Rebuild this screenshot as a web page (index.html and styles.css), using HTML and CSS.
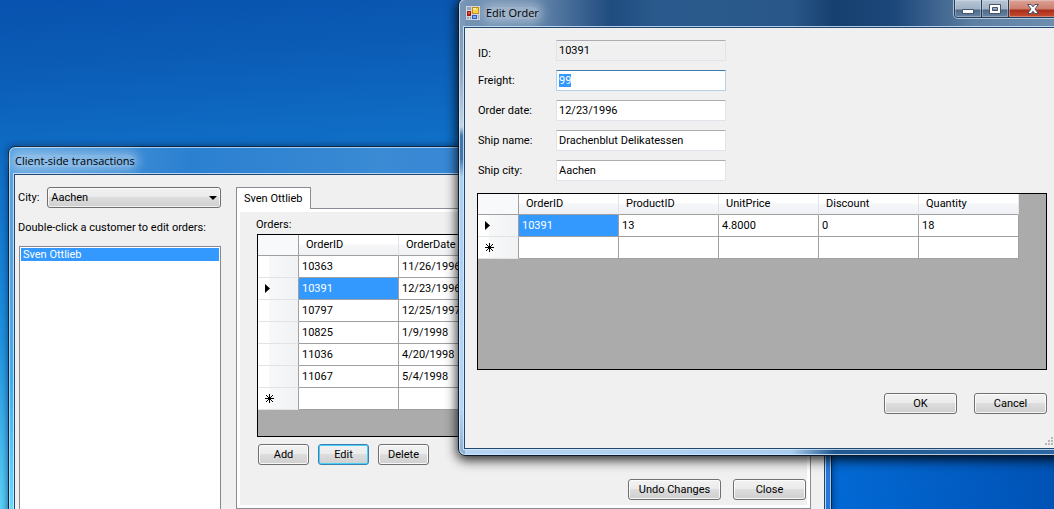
FILE: index.html
```html
<!DOCTYPE html>
<html lang="en">
<head>
<meta charset="utf-8">
<title>Client-side transactions</title>
<link rel="stylesheet" href="styles.css">
</head>
<body>
<main class="desktop">
  <section class="window main-window" aria-labelledby="main-title">
    <header class="titlebar"><h1 class="title" id="main-title">Client-side transactions</h1></header>
    <div class="client main-client">
      <div class="sidebar">
        <div class="city-row">
          <label for="city">City:</label>
          <span class="combo">
            <select id="city"><option>Aachen</option></select>
            <svg class="combo-arrow" width="8" height="4" viewBox="0 0 8 4"><path d="M0 0h8L4 4z"/></svg>
          </span>
        </div>
        <span class="hint" id="hint">Double-click a customer to edit orders:</span>
        <ul class="listbox" aria-labelledby="hint"><li class="selected">Sven Ottlieb</li></ul>
      </div>
      <div class="tabs">
        <div class="tab-strip"><button class="tab" type="button">Sven Ottlieb</button></div>
        <div class="tab-page">
          <div class="orders">
            <span class="orders-label">Orders:</span>
            <div class="grid orders-grid">
              <table>
                <thead><tr><th class="rowhead"></th><th>OrderID</th><th>OrderDate</th></tr></thead>
                <tbody>
                  <tr><td class="rowhead"></td><td>10363</td><td>11/26/1996</td></tr>
                  <tr><td class="rowhead"><svg class="mark" width="10" height="10" viewBox="0 0 10 10"><path d="M0 0l5 4.500-5 4.500z"/></svg></td><td class="current">10391</td><td>12/23/1996</td></tr>
                  <tr><td class="rowhead"></td><td>10797</td><td>12/25/1997</td></tr>
                  <tr><td class="rowhead"></td><td>10825</td><td>1/9/1998</td></tr>
                  <tr><td class="rowhead"></td><td>11036</td><td>4/20/1998</td></tr>
                  <tr><td class="rowhead"></td><td>11067</td><td>5/4/1998</td></tr>
                  <tr><td class="rowhead"><svg class="mark" width="10" height="10" viewBox="0 0 10 10"><path class="star" d="M4.500 0v9M0 4.500h9M1 1l7 7M8 1l-7 7"/></svg></td><td></td><td></td></tr>
                </tbody>
              </table>
            </div>
            <div class="button-row">
              <button class="btn" type="button">Add</button>
              <button class="btn focused" type="button">Edit</button>
              <button class="btn" type="button">Delete</button>
            </div>
          </div>
          <div class="page-actions">
            <button class="btn undo" type="button">Undo Changes</button>
            <button class="btn wide" type="button">Close</button>
          </div>
        </div>
      </div>
    </div>
  </section>

  <section class="window dialog" aria-labelledby="dialog-title">
    <header class="titlebar">
      <svg class="app-icon" width="14" height="14" viewBox="0 0 14 14">
        <path fill="#d0d5de" d="M0 0h14v14H0z"/>
        <path fill="#98a3b6" d="M1 1h4v3H1zM1 11h2v2H1zM4 11h1v2H4z"/>
        <path fill="#9c1f12" d="M1 5h4v5H1z"/><path fill="#df5140" d="M2 6h2v2H2z"/>
        <path fill="#c58b13" d="M6 1h7v7H6z"/><path fill="#ffd040" d="M7 2h5v5H7z"/><path fill="#ffee98" d="M7 2h3v2H7z"/>
        <path fill="#2b5fc0" d="M6 9h5v4H6z"/><path fill="#7fabf5" d="M7 10h3v2H7z"/><path fill="#98a3b6" d="M12 9h1v4h-1z"/>
      </svg>
      <h2 class="title" id="dialog-title">Edit Order</h2>
      <div class="caption-buttons">
        <button class="caption" type="button" aria-label="Minimize"><svg width="12" height="12" viewBox="0 0 12 12"><path class="glyph" d="M.5 6.500h11v4H.5z"/></svg></button>
        <button class="caption" type="button" aria-label="Maximize"><svg width="12" height="12" viewBox="0 0 12 12"><path class="glyph" fill-rule="evenodd" d="M.5 1.500h11v9H.5zM3.500 4.500h5v3h-5z"/></svg></button>
        <button class="caption close" type="button" aria-label="Close"><svg width="12" height="12" viewBox="0 0 12 12"><path class="glyph" d="M.7 1.500h3.500L6 3.800l1.800-2.300h3.500L8 6l3.300 4.500H7.800L6 8.200l-1.800 2.300H.7L4 6z"/></svg></button>
      </div>
    </header>
    <form class="client dialog-client">
      <div class="fields">
        <label class="low" for="id">ID:</label><input id="id" type="text" value="10391" readonly>
        <label for="freight">Freight:</label><input id="freight" class="active" type="text" value="99">
        <label for="date">Order date:</label><input id="date" type="text" value="12/23/1996">
        <label for="name">Ship name:</label><input id="name" type="text" value="Drachenblut Delikatessen">
        <label for="ship-city">Ship city:</label><input id="ship-city" type="text" value="Aachen">
      </div>
      <div class="grid details-grid">
        <table>
          <thead><tr><th class="rowhead"></th><th>OrderID</th><th>ProductID</th><th>UnitPrice</th><th>Discount</th><th>Quantity</th></tr></thead>
          <tbody>
            <tr><td class="rowhead"><svg class="mark" width="10" height="10" viewBox="0 0 10 10"><path d="M0 0l5 4.500-5 4.500z"/></svg></td><td class="current">10391</td><td>13</td><td>4.8000</td><td>0</td><td>18</td></tr>
            <tr><td class="rowhead"><svg class="mark" width="10" height="10" viewBox="0 0 10 10"><path class="star" d="M4.500 0v9M0 4.500h9M1 1l7 7M8 1l-7 7"/></svg></td><td></td><td></td><td></td><td></td><td></td></tr>
          </tbody>
        </table>
      </div>
      <div class="dialog-actions">
        <button class="btn wide" type="button">OK</button>
        <button class="btn wide" type="button">Cancel</button>
      </div>
      <svg class="grip" width="12" height="12" viewBox="0 0 12 12"><path d="M9 1h2v2H9zM6 4h2v2H6zM9 4h2v2H9zM3 7h2v2H3zM6 7h2v2H6zM9 7h2v2H9z"/></svg>
    </form>
  </section>
</main>
<script src="main.js"></script>
</body>
</html>
```
FILE: main.js
```js
const freight = document.getElementById("freight");
freight.focus();
freight.select();
```
FILE: styles.css
```css
* { box-sizing: border-box; }

body {
  margin: 0;
  font: 11px/16px Roboto, "Microsoft Sans Serif", sans-serif;
  color: #000;
}

button, input, select { font: inherit; color: inherit; margin: 0; }

.desktop {
  position: relative;
  height: 100vh;
  overflow: hidden;
  background:
    radial-gradient(ellipse 90px 330px at 0 100%, #5cd2f8 0, rgba(40, 165, 232, .7) 50%, rgba(18, 120, 208, 0) 100%),
    linear-gradient(90deg, rgba(0, 80, 180, 0) 80%, rgba(0, 60, 150, .5) 100%),
    linear-gradient(176deg, #0752ae 0, #0b5cb5 12%, #1070c8 30%, #0a69d0 70%, #0068d4 100%);
}

.window {
  position: absolute;
  display: flex;
  flex-direction: column;
  border: 1px solid #10243c;
  border-radius: 7px;
}

.titlebar { display: flex; align-items: center; }

.title {
  margin: 0;
  font: 11px/12px "Open Sans", "Segoe UI", sans-serif;
  border-radius: 8px;
  background: rgba(255, 255, 255, .33);
  box-shadow: 0 0 10px 4px rgba(255, 255, 255, .33);
}

.client {
  flex: 1;
  min-height: 0;
  border: 1px solid #24476f;
  background: #f0f0f0;
  box-shadow: 0 0 0 1px rgba(215, 235, 252, .8);
}

/* Main window */
.main-window {
  inset: 146px 222px -24px 8px;
  padding: 0 6px 6px 5px;
  background:
    linear-gradient(180deg, rgba(90, 220, 255, 0) 25%, rgba(60, 175, 240, .9) 60%, #66dcff 95%) 0 0 / 8px 100% no-repeat,
    linear-gradient(90deg, #5ba2e0 0, #2b80d0 22%, #3a8ad4 45%, #2479da 100%);
  box-shadow: inset 0 0 0 1px rgba(200, 230, 252, .75), 0 0 7px rgba(0, 15, 50, .6);
}

.main-window .titlebar { height: 27px; padding-left: 1px; }

.main-client { display: flex; gap: 15px; padding: 12px 13px 0 3px; }

.sidebar { display: flex; flex-direction: column; width: 203px; }
.city-row { display: flex; align-items: center; gap: 8px; }
.combo { position: relative; flex: 1; }
.combo select {
  display: block;
  width: 100%;
  height: 21px;
  padding: 0 3px;
  appearance: none;
  border: 1px solid #707070;
  border-radius: 3px;
  background: linear-gradient(#f2f2f2 0, #ebebeb 48%, #dddddd 50%, #cfcfcf 100%);
  box-shadow: inset 0 0 0 1px rgba(255, 255, 255, .7);
}
.combo-arrow { position: absolute; right: 4px; top: 9px; }
.hint { margin: 12px 0 10px; white-space: nowrap; }
.listbox {
  flex: 1;
  margin: 0 0 0 1px;
  padding: 1px;
  list-style: none;
  border: 1px solid #828790;
  background: #fff;
}
.listbox li { padding: 0 2px; line-height: 13px; }
.selected { background: #3399ff; color: #fff; }

.tabs { display: flex; flex: 1; flex-direction: column; min-width: 0; padding-bottom: 16px; }
.tab-strip { display: flex; }
.tab {
  position: relative;
  height: 22px;
  margin-bottom: -1px;
  padding: 0 7px;
  border: 1px solid #898c95;
  border-bottom: 0;
  background: #fff;
}
.tab-page {
  display: flex;
  flex: 1;
  flex-direction: column;
  justify-content: space-between;
  padding: 8px 2px 8px 17px;
  border: 1px solid #898c95;
  background: #f0f0f0;
  box-shadow: inset 0 0 0 3px #fff;
}
.orders { display: flex; flex-direction: column; }
.orders-label { padding-left: 2px; margin-bottom: 1px; }
.button-row { display: flex; gap: 9px; padding: 7px 0 0 4px; }
.page-actions { display: flex; justify-content: flex-end; gap: 12px; padding-right: 2px; }

/* Push buttons */
.btn {
  width: 51px;
  height: 21px;
  padding: 0;
  border: 1px solid #707070;
  border-radius: 3px;
  background: linear-gradient(#f2f2f2 0, #ebebeb 48%, #dddddd 50%, #cfcfcf 100%);
  box-shadow: inset 0 0 0 1px rgba(255, 255, 255, .8);
}
.btn.wide { width: 73px; }
.btn.undo { width: 93px; }
.btn.focused { border-color: #3c7fb1; box-shadow: inset 0 0 0 1px #48d0f5; }

/* Data grids */
.grid { border: 1px solid #000; background: #ababab; overflow: hidden; }
.orders-grid { height: 203px; margin-left: 3px; }
.details-grid { height: 177px; }

.grid table { table-layout: fixed; width: 0; border-collapse: separate; border-spacing: 0; }
.grid th, .grid td {
  width: 100px;
  height: 22px;
  padding: 0 3px;
  border: solid #a0a0a0;
  border-width: 0 1px 1px 0;
  background: #fff;
  text-align: left;
  line-height: 16px;
  white-space: nowrap;
}
.grid th {
  height: 21px;
  padding-left: 7px;
  font-weight: normal;
  border-right-color: #e2e3e5;
  background: linear-gradient(#fff 0, #fff 45%, #f5f6f8 50%, #f0f1f4 100%);
}
.grid .rowhead {
  width: 41px;
  padding: 0 0 0 7px;
  border-bottom-color: #e2e3e5;
  border-right-color: #a0a0a0;
  background: linear-gradient(90deg, #fff 0, #fff 26%, #f7f8fa 28%, #f1f2f4 100%);
}
.grid th.rowhead { border-bottom-color: #a0a0a0; background: #f8f9fa; }
.grid .current { background: #3399ff; color: #fff; }
.mark { display: block; }
.star { stroke: #000; fill: none; }

/* Order dialog */
.dialog {
  inset: -2px -11px 53px 458px;
  padding: 0 6px 6px 5px;
  border-color: #0c1a2c;
  background:
    linear-gradient(180deg, #7795b5 0, #88a5c2 15%, #c5d5e6 28%, #3f77ad 30%, #3f77ad 35%, #a9cff4 39%, #b5d5f5 90%, #8caed0 100%) 0 0 / 6px 100% no-repeat,
    linear-gradient(90deg, #b5d3f2 0, #a9cdf0 55%, #20578f 62%, #2c68a4 100%) 0 100% / 100% 8px no-repeat,
    linear-gradient(90deg, #7594b5 0, #6889ad 12%, #204c80 25%, #2a5a8d 33%, #295789 55%, #16406f 62%, #1c477a 72%, #5d7fa2 85%, #6d8fb0 100%);
  box-shadow: inset 0 0 0 1px rgba(215, 232, 250, .8), 0 3px 12px 1px rgba(0, 0, 0, .85);
}
.dialog .titlebar { height: 28px; gap: 6px; padding-left: 2px; }
.caption-buttons {
  display: flex;
  align-self: flex-start;
  margin-left: auto;
  height: 19px;
  border: 1px solid #263c56;
  border-radius: 0 0 4px 4px;
  box-shadow: 0 0 0 1px rgba(210, 225, 240, .7);
  overflow: hidden;
}
.caption {
  display: grid;
  place-items: center;
  width: 27px;
  padding: 0;
  border: 0;
  border-right: 1px solid #263c56;
  background: linear-gradient(#b9c7d6 0, #9fb1c4 54%, #4d6985 58%, #6785a3 100%);
  box-shadow: inset 0 0 0 1px rgba(225, 235, 245, .35);
}
.caption.close { width: 48px; border-right: 0; background: linear-gradient(#dea294 0, #cb7d6d 54%, #a92b17 58%, #c84e32 100%); }
.glyph { fill: #fff; stroke: #46526a; }

.dialog-client { position: relative; display: flex; flex-direction: column; padding: 12px 10px 0 12px; }
.fields {
  display: grid;
  grid-template-columns: 78px 170px;
  grid-auto-rows: 21px;
  row-gap: 9px;
  align-items: center;
  padding-left: 1px;
  margin-bottom: 12px;
}
.fields .low { align-self: end; line-height: 14px; }
.fields input {
  width: 170px;
  height: 21px;
  padding: 0 2px;
  border: 1px solid #e2e3ea;
  border-top-color: #abadb3;
  border-radius: 1px;
  background: #fff;
  outline: none;
}
.fields input:read-only { background: #f0f0f0; }
.fields .active { border-color: #b5cfe7; border-top-color: #3d7bad; }
.fields input::selection { background: #3399ff; color: #fff; }
.dialog-actions { display: flex; justify-content: flex-end; gap: 17px; padding-top: 23px; }
.grip { position: absolute; right: 3px; bottom: 0; fill: #b8b8b8; }
```
